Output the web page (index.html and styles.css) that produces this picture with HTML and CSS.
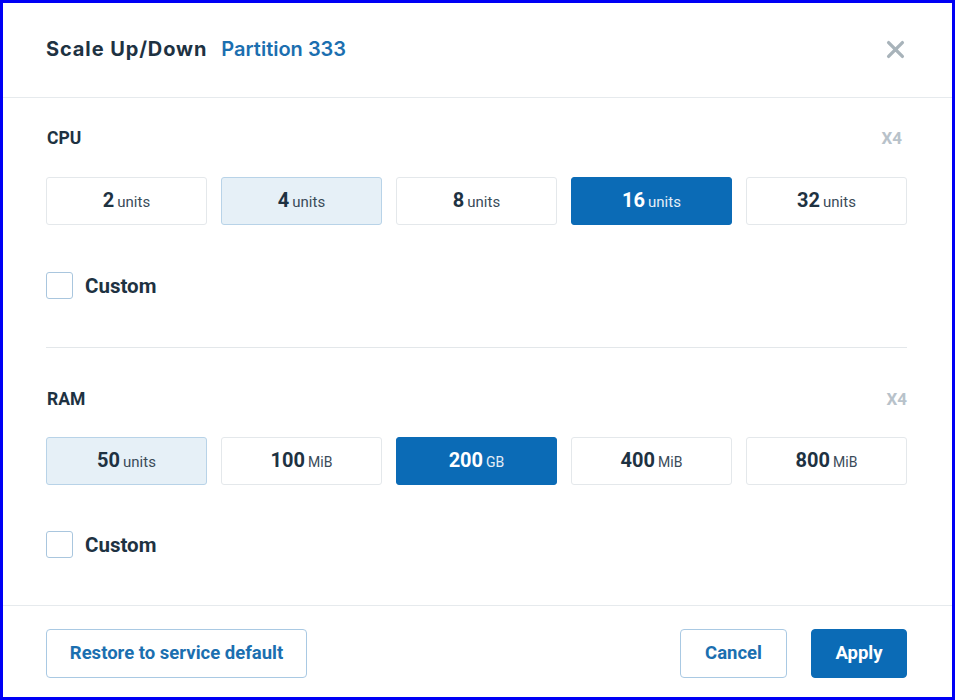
FILE: index.html
```html
<!DOCTYPE html>
<html>
<head>
<meta charset="utf-8">
<link rel="stylesheet" href="styles.css">
</head>
<body>
<div class="modal">
  <div class="header">
    <div class="title"><span class="title-main">Scale Up/Down</span><span class="title-sub">Partition 333</span></div>
    <button class="close" aria-label="Close">
      <svg width="19" height="19" viewBox="0 0 19 19"><path d="M2.6 2.6 L16.4 16.4 M16.4 2.6 L2.6 16.4" stroke="#a8b3ba" stroke-width="3.3" stroke-linecap="round"/></svg>
    </button>
  </div>
  <div class="body">
    <div class="section section-cpu">
      <div class="section-head"><span class="label">CPU</span><span class="mult">X4</span></div>
      <div class="options">
        <button class="opt"><b>2</b><span>units</span></button>
        <button class="opt opt-light"><b>4</b><span>units</span></button>
        <button class="opt"><b>8</b><span>units</span></button>
        <button class="opt opt-active"><b>16</b><span>units</span></button>
        <button class="opt"><b>32</b><span>units</span></button>
      </div>
      <label class="custom"><span class="box"></span><span class="custom-text">Custom</span></label>
    </div>
    <div class="section section-ram">
      <div class="section-head"><span class="label">RAM</span><span class="mult">X4</span></div>
      <div class="options">
        <button class="opt opt-light"><b>50</b><span>units</span></button>
        <button class="opt"><b>100</b><span class="mib">MiB</span></button>
        <button class="opt opt-active"><b>200</b><span class="mib">GB</span></button>
        <button class="opt"><b>400</b><span class="mib">MiB</span></button>
        <button class="opt"><b>800</b><span class="mib">MiB</span></button>
      </div>
      <label class="custom"><span class="box"></span><span class="custom-text">Custom</span></label>
    </div>
  </div>
  <div class="footer">
    <button class="btn btn-outline btn-restore">Restore to service default</button>
    <div class="footer-right">
      <button class="btn btn-outline btn-cancel">Cancel</button>
      <button class="btn btn-primary btn-apply">Apply</button>
    </div>
  </div>
</div>
</body>
</html>
```

FILE: styles.css
```css
* { box-sizing: border-box; }
html, body { margin: 0; padding: 0; background: #ffffff; }
body { font-family: Roboto, "Liberation Sans", Arial, sans-serif; color: #1e3242; }
button { font-family: inherit; cursor: pointer; }

.modal {
  width: 955px;
  height: 700px;
  border: 3px solid #0000f5;
  display: flex;
  flex-direction: column;
  background: #fff;
}

.header {
  height: 95px;
  flex: none;
  border-bottom: 1px solid #e6eaed;
  display: flex;
  align-items: center;
  justify-content: space-between;
  padding: 0 47px 2px 43px;
}
.title { display: flex; align-items: baseline; gap: 14px; }
.title-main { font-family: Inter, Roboto, sans-serif; font-weight: 700; font-size: 20px; color: #1e3242; letter-spacing: 0.9px; }
.title-sub { font-family: Inter, Roboto, sans-serif; font-weight: 600; font-size: 20px; color: #1b6fb0; }
.close { border: 0; background: transparent; padding: 0; width: 19px; height: 19px; display: flex; align-items: center; justify-content: center; }

.body { flex: 1; padding: 0 45px 0 43px; }
.section-cpu { padding-top: 30px; padding-bottom: 48px; border-bottom: 1px solid #e3e7ea; }
.section-ram { padding-top: 41px; }

.section-head { display: flex; justify-content: space-between; align-items: center; height: 20px; }
.label { font-weight: 700; font-size: 17.5px; color: #1e3242; padding-left: 1px; }
.mult { font-weight: 700; font-size: 17px; color: #b8c2ca; }
.section-cpu .mult { padding-right: 5px; }

.options { display: grid; grid-template-columns: repeat(5, 1fr); gap: 14px; margin-top: 29px; }
.section-ram .options { margin-top: 28px; }
.opt {
  height: 48px;
  border: 1px solid #e4e8eb;
  border-radius: 3px;
  background: #fff;
  color: #1e3242;
  display: flex;
  align-items: baseline;
  justify-content: center;
  padding: 10px 0 0;
  gap: 3px;
}
.opt b { font-weight: 700; font-size: 20px; }
.opt span { font-size: 15px; font-weight: 400; color: #3a4b59; }
.opt span.mib { font-size: 14px; }
.opt-light { background: #e6f0f7; border-color: #b8d3e8; }
.opt-active { background: #0b6bb6; border-color: #0b6bb6; color: #fff; }
.opt-active span { color: #e4eef7; }

.custom { display: flex; align-items: center; gap: 12px; margin-top: 47px; height: 27px; }
.section-ram .custom { margin-top: 46px; }
.box { width: 27px; height: 27px; border: 1px solid #a9c6de; border-radius: 3px; background: #fff; }
.custom-text { font-weight: 700; font-size: 20.5px; color: #1e3242; }

.footer {
  flex: none;
  height: 92px;
  border-top: 1px solid #e6eaed;
  display: flex;
  justify-content: space-between;
  align-items: flex-start;
  padding: 23px 45px 0 43px;
}
.footer-right { display: flex; gap: 24px; }
.btn { height: 49px; border-radius: 4px; font-weight: 700; font-size: 18.5px; padding: 0 0 2px; }
.btn-outline { background: #fff; border: 1px solid #a9c9e3; color: #1b6fb0; }
.btn-primary { background: #0b6bb6; border: 1px solid #0b6bb6; color: #fff; }
.btn-restore { width: 261px; }
.btn-cancel { width: 107px; }
.btn-apply { width: 96px; }
```
